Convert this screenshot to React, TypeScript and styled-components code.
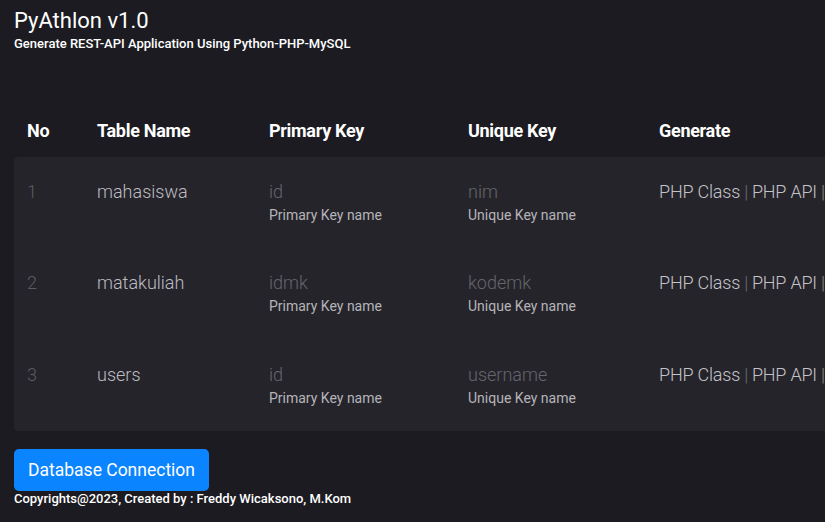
import styled, { createGlobalStyle } from 'styled-components';

const GlobalStyle = createGlobalStyle`
  html, body {
    margin: 0;
    padding: 0;
    background: #1b1b21;
    overflow: hidden;
  }
  body {
    font-family: Roboto, "Liberation Sans", sans-serif;
    color: #fff;
  }
`;

interface TableRow {
  no: number;
  name: string;
  primary: string;
  unique: string;
}

const rows: TableRow[] = [
  { no: 1, name: 'mahasiswa', primary: 'id', unique: 'nim' },
  { no: 2, name: 'matakuliah', primary: 'idmk', unique: 'kodemk' },
  { no: 3, name: 'users', primary: 'id', unique: 'username' },
];

export default function App() {
  return (
    <>
      <GlobalStyle />
      <Page>
        <Title>PyAthlon v1.0</Title>
        <Subtitle>Generate REST-API Application Using Python-PHP-MySQL</Subtitle>

        <Table>
          <HeadRow>
            <HeadCell>No</HeadCell>
            <HeadCell>Table Name</HeadCell>
            <HeadCell>Primary Key</HeadCell>
            <HeadCell>Unique Key</HeadCell>
            <HeadCell>Generate</HeadCell>
          </HeadRow>
          <Body>
            {rows.map((r) => (
              <Row key={r.no}>
                <Cell $dim>{r.no}</Cell>
                <Cell>{r.name}</Cell>
                <Cell>
                  <KeyValue>{r.primary}</KeyValue>
                  <Hint>Primary Key name</Hint>
                </Cell>
                <Cell>
                  <KeyValue>{r.unique}</KeyValue>
                  <Hint>Unique Key name</Hint>
                </Cell>
                <Cell>
                  <Links>
                    PHP Class<Sep>|</Sep>PHP API<Sep $warm>|</Sep>Python Client
                  </Links>
                </Cell>
              </Row>
            ))}
          </Body>
        </Table>

        <PrimaryButton>Database Connection</PrimaryButton>
        <Footer>Copyrights@2023, Created by : Freddy Wicaksono, M.Kom</Footer>
      </Page>
    </>
  );
}

const Page = styled.div`
  padding: 6px 14px 0;
  width: 1100px;
`;

const Title = styled.h1`
  margin: 0;
  font-size: 22px;
  font-weight: 400;
  line-height: 30px;
`;

const Subtitle = styled.div`
  font-size: 13px;
  font-weight: 500;
  line-height: 16px;
`;

const Table = styled.div`
  margin-top: 48px;
`;

const columns = '70px 172px 199px 191px 1fr';

const HeadRow = styled.div`
  display: grid;
  grid-template-columns: ${columns};
  height: 57px;
  align-items: center;
  padding-top: 3px;
  box-sizing: border-box;
`;

const HeadCell = styled.div`
  padding-left: 13px;
  font-size: 18px;
  font-weight: 700;
  letter-spacing: -0.3px;
`;

const Body = styled.div`
  background: #25242b;
  border-top-left-radius: 4px;
  border-bottom-left-radius: 4px;
`;

const Row = styled.div`
  display: grid;
  grid-template-columns: ${columns};
  height: 91.33px;
  align-items: start;
  padding-top: 23px;
  box-sizing: border-box;
`;

const Cell = styled.div<{ $dim?: boolean }>`
  padding-left: 13px;
  font-size: 18px;
  font-weight: 300;
  line-height: 24px;
  color: ${(p) => (p.$dim ? '#5d5c63' : '#bdbcc1')};
  white-space: nowrap;
`;

const KeyValue = styled.div`
  color: #66656b;
`;

const Hint = styled.div`
  font-size: 14px;
  font-weight: 400;
  line-height: 22px;
  color: #b5b4b9;
`;

const Links = styled.span`
  color: #c4c3c8;
  letter-spacing: -0.2px;
`;

const Sep = styled.span<{ $warm?: boolean }>`
  margin: 0 4px;
  color: ${(p) => (p.$warm ? '#9a8a80' : '#6f6e74')};
`;

const PrimaryButton = styled.button`
  margin-top: 18px;
  display: block;
  height: 42px;
  padding: 0 14px;
  background: #0b84ff;
  color: #fff;
  border: none;
  border-radius: 5px;
  font-family: Roboto, "Liberation Sans", sans-serif;
  font-size: 17.5px;
  font-weight: 400;
  cursor: pointer;
`;

const Footer = styled.div`
  font-size: 13px;
  font-weight: 500;
  line-height: 16px;
`;
